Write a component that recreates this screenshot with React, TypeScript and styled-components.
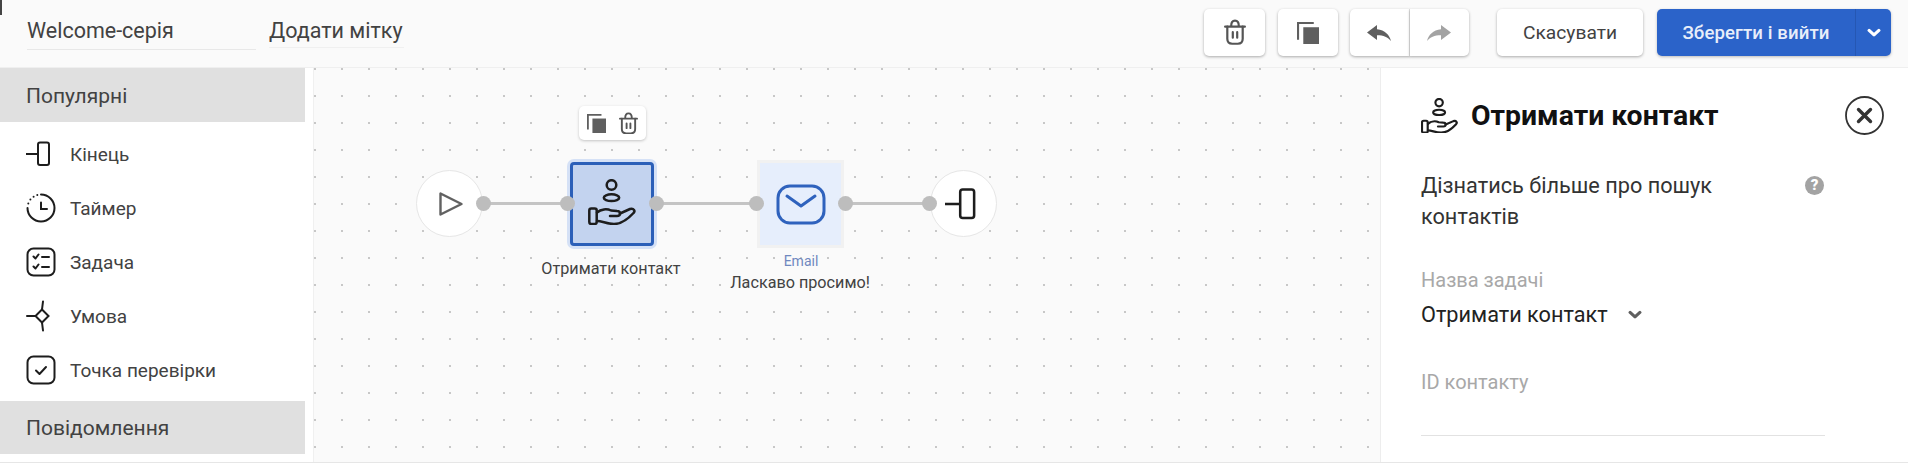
import React from "react";
import styled, { createGlobalStyle } from "styled-components";

const Global = createGlobalStyle`
  html, body { margin: 0; padding: 0; background: #fff; overflow: hidden; }
  * { box-sizing: border-box; }
  body { font-family: Roboto, "Noto Sans", sans-serif; }
`;

const Page = styled.div`
  position: relative;
  width: 1908px;
  height: 463px;
  display: flex;
  flex-direction: column;
  overflow: hidden;
`;

const Corner = styled.div`
  position: absolute;
  left: 0;
  top: 0;
  width: 2px;
  height: 15px;
  background: #444;
`;

const Header = styled.header`
  height: 68px;
  flex: none;
  display: flex;
  align-items: flex-start;
  padding: 9px 17px 0 27px;
  background: #fafafa;
  border-bottom: 1px solid #efefef;
`;

const NameField = styled.div`
  width: 229px;
  height: 41px;
  padding-top: 9px;
  font-size: 21.5px;
  line-height: 25px;
  color: #424242;
  border-bottom: 1px solid #e8e8e8;
`;

const TagField = styled.div`
  width: 135px;
  height: 39px;
  margin-left: 13px;
  padding-top: 9px;
  font-size: 21.5px;
  line-height: 25px;
  white-space: nowrap;
  color: #424242;
  border-bottom: 1px solid #f0f0f0;
`;

const Actions = styled.div`
  margin-left: auto;
  display: flex;
  align-items: flex-start;
`;

const ToolButton = styled.button<{ $gap?: number; $w?: number; $joined?: "left" | "right" }>`
  width: ${(p) => p.$w ?? (p.$joined ? 59.5 : 61)}px;
  height: 47px;
  margin-right: ${(p) => p.$gap ?? 0}px;
  padding: 0;
  display: flex;
  align-items: center;
  justify-content: center;
  border: none;
  background: #fff;
  border-radius: ${(p) =>
    p.$joined === "left" ? "5px 0 0 5px" : p.$joined === "right" ? "0 5px 5px 0" : "5px"};
  border-right: ${(p) => (p.$joined === "left" ? "1px solid #e2e2e2" : "none")};
  box-shadow: 0 1px 3px rgba(0, 0, 0, 0.32);
`;

const CancelButton = styled.button`
  width: 146px;
  height: 47px;
  margin-right: 14px;
  padding: 0;
  border: none;
  border-radius: 5px;
  background: #fff;
  color: #424242;
  font: 400 19.2px Roboto, sans-serif;
  box-shadow: 0 1px 3px rgba(0, 0, 0, 0.32);
`;

const SaveGroup = styled.div`
  width: 234px;
  height: 47px;
  display: flex;
  border-radius: 5px;
  background: #2b63c9;
  box-shadow: 0 1px 3px rgba(0, 0, 0, 0.25);
  overflow: hidden;
`;

const SaveMain = styled.button`
  flex: 1;
  padding: 0;
  border: none;
  background: transparent;
  color: #e8eefa;
  font: 500 18.6px Roboto, sans-serif;
  letter-spacing: 0.1px;
`;

const SaveCaret = styled.button`
  width: 36px;
  padding: 0;
  border: none;
  border-left: 1px solid #2557b3;
  background: transparent;
  display: flex;
  align-items: center;
  justify-content: center;
`;

const Body = styled.div`
  flex: 1;
  min-height: 0;
  display: flex;
  border-bottom: 1px solid #e6e6e6;
`;

const Sidebar = styled.aside`
  width: 314px;
  flex: none;
  padding-right: 8px;
  background: #fff;
  border-right: 1px solid #f0f0f0;
`;

const SectionTitle = styled.div<{ $mt?: number; $h?: number }>`
  height: ${(p) => p.$h ?? 54}px;
  margin-top: ${(p) => p.$mt ?? 0}px;
  padding: 1px 0 0 26px;
  display: flex;
  align-items: center;
  background: #e0e0e0;
  color: #424242;
  font-size: 21px;
`;

const ItemList = styled.ul`
  list-style: none;
  margin: 0;
  padding: 5px 0 0 26px;
`;

const Item = styled.li`
  height: 54px;
  display: flex;
  align-items: center;
  gap: 14px;
  color: #424242;
  font-size: 19px;
`;

const Canvas = styled.main`
  position: relative;
  flex: 1;
  min-width: 0;
  background-color: #fafafa;
  background-image: radial-gradient(circle at 1px 1px, #c6c6c6 0.7px, transparent 1px);
  background-size: 27px 27px;
  background-position: 0 0;
`;

const Wire = styled.div<{ $x: number; $w: number }>`
  position: absolute;
  left: ${(p) => p.$x}px;
  top: 134px;
  width: ${(p) => p.$w}px;
  height: 3px;
  background: #c4c4c4;
`;

const Port = styled.div<{ $x: number }>`
  position: absolute;
  left: ${(p) => p.$x - 7}px;
  top: 128px;
  width: 15px;
  height: 15px;
  border-radius: 50%;
  background: #bdbdbd;
  z-index: 2;
`;

const RoundNode = styled.div<{ $x: number }>`
  position: absolute;
  left: ${(p) => p.$x}px;
  top: 102px;
  width: 67px;
  height: 67px;
  border-radius: 50%;
  background: #fff;
  border: 1px solid #e6e6e6;
  display: flex;
  align-items: center;
  justify-content: center;
`;

const SelectedNode = styled.div`
  position: absolute;
  left: 256px;
  top: 94px;
  width: 84px;
  height: 84px;
  padding-bottom: 5px;
  background: #c3d3ef;
  border: 3px solid #2b5fb8;
  border-radius: 4px;
  box-shadow: 0 0 0 3px #d5e1f6;
  display: flex;
  align-items: center;
  justify-content: center;
`;

const EmailNode = styled.div`
  position: absolute;
  left: 446px;
  top: 95px;
  width: 81px;
  height: 82px;
  background: #e6eefc;
  box-shadow: 0 0 0 3px #f1f1f1;
  display: flex;
  align-items: center;
  justify-content: center;
`;

const NodeToolbar = styled.div`
  position: absolute;
  left: 265px;
  top: 38px;
  width: 67px;
  height: 34px;
  display: flex;
  align-items: center;
  justify-content: center;
  gap: 13px;
  background: #fff;
  border-radius: 5px;
  box-shadow: 0 1px 3px rgba(0, 0, 0, 0.22);
`;

const NodeLabel = styled.div<{ $cx: number; $y: number; $kind?: "type" }>`
  position: absolute;
  left: ${(p) => p.$cx - 100}px;
  top: ${(p) => p.$y}px;
  width: 200px;
  text-align: center;
  line-height: 18px;
  font-size: ${(p) => (p.$kind ? 14 : 16.2)}px;
  color: ${(p) => (p.$kind ? "#6f88bf" : "#424242")};
`;

const Panel = styled.aside`
  width: 528px;
  flex: none;
  padding: 28px 24px 0 40px;
  background: #fff;
  border-left: 1px solid #ededed;
`;

const PanelHead = styled.div`
  height: 39px;
  display: flex;
  align-items: center;
  gap: 13px;
`;

const PanelTitle = styled.h2`
  margin: 0;
  font-size: 28.4px;
  font-weight: 700;
  color: #111;
`;

const CloseButton = styled.button`
  margin-left: auto;
  padding: 0;
  width: 39px;
  height: 39px;
  border: none;
  background: none;
  display: block;
`;

const HelpRow = styled.div`
  margin-top: 35px;
  display: flex;
  align-items: flex-start;
`;

const HelpText = styled.p`
  margin: 0;
  width: 384px;
  font-size: 21.7px;
  line-height: 31px;
  color: #333;
`;

const HelpBadge = styled.span`
  margin-top: 6px;
  width: 19px;
  height: 19px;
  border-radius: 50%;
  background: #a3a3a3;
  color: #fff;
  font-size: 15px;
  font-weight: 900;
  line-height: 19px;
  text-align: center;
`;

const FieldLabel = styled.div<{ $mt: number }>`
  margin-top: ${(p) => p.$mt}px;
  font-size: 20px;
  line-height: 24px;
  color: #a8a8a8;
`;

const SelectValue = styled.div`
  margin-top: 11px;
  display: flex;
  align-items: center;
  gap: 20px;
  font-size: 21.7px;
  line-height: 24px;
  color: #222;
`;

const InputLine = styled.div`
  margin-top: 41px;
  width: 404px;
  height: 1px;
  background: #e2e2e2;
`;

const Ink = "#1d1d1d";

const EndIcon = ({ size = 30 }: { size?: number }) => (
  <svg width={size} height={size} viewBox="0 0 30 30" fill="none" stroke={Ink} strokeWidth={2}>
    <path d="M0 15h12" />
    <rect x="12" y="3.5" width="11" height="22.5" rx="2" />
  </svg>
);

const TimerIcon = () => (
  <svg width="30" height="30" viewBox="0 0 30 30" fill="none" stroke={Ink} strokeWidth={2} strokeLinecap="round">
    <path d="M15 1.5A13.5 13.5 0 1 1 1.5 15" />
    <path d="M2.3 10.5v.01M4.4 6.6v.01M7.6 3.7v.01M11.3 2v.01" />
    <path d="M15 9.5V16h6" />
  </svg>
);

const TaskIcon = () => (
  <svg width="30" height="30" viewBox="0 0 30 30" fill="none" stroke={Ink} strokeWidth={2} strokeLinecap="round" strokeLinejoin="round">
    <rect x="1.5" y="1.5" width="27" height="27" rx="6" />
    <path d="M7.5 9.5l2 2 3-4M7.5 19.5l2 2 3-4M16 10h7M16 20h7" />
  </svg>
);

const ConditionIcon = () => (
  <svg width="30" height="32" viewBox="0 0 30 32" fill="none" stroke={Ink} strokeWidth={2} strokeLinecap="round">
    <path d="M16 9.5l6.5 6.5-6.5 6.5L9.5 16z" />
    <path d="M1 16h8M17 1.5l-1 8M16 22.5l1 8" />
  </svg>
);

const CheckIcon = () => (
  <svg width="30" height="30" viewBox="0 0 30 30" fill="none" stroke={Ink} strokeWidth={2} strokeLinecap="round" strokeLinejoin="round">
    <rect x="1.5" y="1.5" width="27" height="27" rx="6" />
    <path d="M10 15.5l3.5 3.5 6.5-7" />
  </svg>
);

const HandIcon = ({ w = 48, sw = 2.5 }: { w?: number; sw?: number }) => (
  <svg width={w} height={(w * 46) / 48} viewBox="0 0 48 46" fill="none" stroke={Ink} strokeWidth={sw} strokeLinecap="round" strokeLinejoin="round">
    <circle cx="23.5" cy="6" r="4.8" />
    <ellipse cx="23.5" cy="18.7" rx="7.7" ry="3.4" />
    <rect x="1.3" y="29.5" width="7.4" height="15.5" rx="2" />
    <path d="M9 33.5C13 30 19 29.5 23 31.5l6 .5c4 0 4 5 0 5h-7" />
    <path d="M32 34.5l10-4.5c4-1 5.5 2 3.5 4C40 40 33 45 26 45c-7 0-12-3-17-3" />
  </svg>
);

const MailIcon = () => (
  <svg width="50" height="41" viewBox="0 0 50 41" fill="none" stroke="#2f62bd" strokeWidth={3} strokeLinecap="round" strokeLinejoin="round">
    <rect x="2" y="2" width="46" height="37" rx="12" />
    <path d="M11 12l14 10 14-10" />
  </svg>
);

const PlayIcon = () => (
  <svg width="28" height="28" viewBox="0 0 28 28" fill="none" stroke="#616161" strokeWidth={2.4} strokeLinejoin="round">
    <path d="M4.5 3.5v21l21-10.5z" />
  </svg>
);

const TrashIcon = ({ w = 22 }: { w?: number }) => (
  <svg width={w} height={w * 1.2} viewBox="0 0 20 24" fill="none" stroke="#555" strokeWidth={2} strokeLinecap="round" strokeLinejoin="round">
    <path d="M1 7h18M6.5 6.5C6.5 3 8 1.5 10 1.5s3.5 1.5 3.5 5" />
    <path d="M3 7v11c0 3 2 4.5 4.5 4.5h5c2.5 0 4.5-1.5 4.5-4.5V7" />
    <path d="M8 12v5M12 12v5" />
  </svg>
);

const CopyIcon = ({ w = 22 }: { w?: number }) => (
  <svg width={w} height={w} viewBox="0 0 21 21" fill="none">
    <path d="M1 17V1h15" stroke="#5f5f5f" strokeWidth={2} />
    <rect x="6" y="5" width="15" height="16" fill="#5f5f5f" />
  </svg>
);

const ReplyIcon = ({ flip, color }: { flip?: boolean; color: string }) => (
  <svg width="24" height="16" viewBox="0 0 24 16" style={flip ? { transform: "scaleX(-1)" } : undefined}>
    <path d="M10 0v4.3C18 5.2 22.5 10 24 16c-3-4-7.5-5.8-14-5.8V15L0 7.5z" fill={color} />
  </svg>
);

const Chevron = ({ color, w = 14 }: { color: string; w?: number }) => (
  <svg width={w} height={w * 0.7} viewBox="0 0 14 10" fill="none" stroke={color} strokeWidth={3.2} strokeLinecap="round" strokeLinejoin="round">
    <path d="M2 2.5l5 4.5 5-4.5" />
  </svg>
);

const CloseIcon = () => (
  <svg width="39" height="39" viewBox="0 0 39 39" fill="none" stroke="#333" strokeLinecap="round">
    <circle cx="19.5" cy="19.5" r="18.5" strokeWidth={1.8} />
    <path d="M13.5 13.5l12 12M25.5 13.5l-12 12" strokeWidth={3.4} />
  </svg>
);

const items: [React.ReactNode, string][] = [
  [<EndIcon />, "Кінець"],
  [<TimerIcon />, "Таймер"],
  [<TaskIcon />, "Задача"],
  [<ConditionIcon />, "Умова"],
  [<CheckIcon />, "Точка перевірки"],
];

export default function App() {
  return (
    <Page>
      <Global />
      <Corner />
      <Header>
        <NameField>Welcome-серія</NameField>
        <TagField>Додати мітку</TagField>
        <Actions>
          <ToolButton $gap={13}><TrashIcon /></ToolButton>
          <ToolButton $gap={12} $w={60}><CopyIcon /></ToolButton>
          <ToolButton $joined="left"><ReplyIcon color="#5f5f5f" /></ToolButton>
          <ToolButton $joined="right" $gap={28}><ReplyIcon flip color="#a3a3a3" /></ToolButton>
          <CancelButton>Скасувати</CancelButton>
          <SaveGroup>
            <SaveMain>Зберегти і вийти</SaveMain>
            <SaveCaret><Chevron color="#fff" /></SaveCaret>
          </SaveGroup>
        </Actions>
      </Header>
      <Body>
        <Sidebar>
          <SectionTitle>Популярні</SectionTitle>
          <ItemList>
            {items.map(([icon, label]) => (
              <Item key={label}>{icon}{label}</Item>
            ))}
          </ItemList>
          <SectionTitle $mt={4} $h={53}>Повідомлення</SectionTitle>
        </Sidebar>
        <Canvas>
          <Wire $x={169} $w={90} />
          <Wire $x={342} $w={100} />
          <Wire $x={531} $w={84} />
          <RoundNode $x={102}><PlayIcon /></RoundNode>
          <NodeToolbar>
            <CopyIcon w={19} />
            <TrashIcon w={19} />
          </NodeToolbar>
          <SelectedNode><HandIcon /></SelectedNode>
          <EmailNode><MailIcon /></EmailNode>
          <RoundNode $x={616}><EndIcon size={38} /></RoundNode>
          <Port $x={169} />
          <Port $x={253} />
          <Port $x={342} />
          <Port $x={442} />
          <Port $x={531} />
          <Port $x={615} />
          <NodeLabel $cx={297} $y={192}>Отримати контакт</NodeLabel>
          <NodeLabel $cx={487} $y={184} $kind="type">Email</NodeLabel>
          <NodeLabel $cx={486} $y={206}>Ласкаво просимо!</NodeLabel>
        </Canvas>
        <Panel>
          <PanelHead>
            <HandIcon w={37} sw={2.8} />
            <PanelTitle>Отримати контакт</PanelTitle>
            <CloseButton><CloseIcon /></CloseButton>
          </PanelHead>
          <HelpRow>
            <HelpText>Дізнатись більше про пошук контактів</HelpText>
            <HelpBadge>?</HelpBadge>
          </HelpRow>
          <FieldLabel $mt={36}>Назва задачі</FieldLabel>
          <SelectValue>
            Отримати контакт
            <Chevron color="#5f5f5f" />
          </SelectValue>
          <FieldLabel $mt={43}>ID контакту</FieldLabel>
          <InputLine />
        </Panel>
      </Body>
    </Page>
  );
}
